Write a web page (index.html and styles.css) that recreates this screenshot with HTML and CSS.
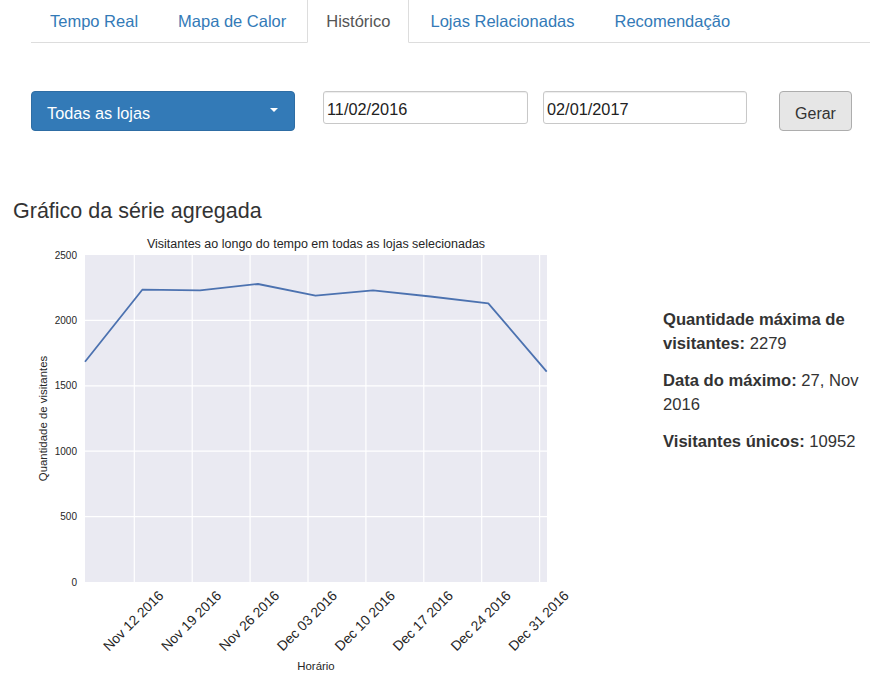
FILE: index.html
```html
<!DOCTYPE html>
<html lang="pt">
<head>
<meta charset="utf-8">
<title>Histórico</title>
<link rel="stylesheet" href="styles.css">
</head>
<body>
<ul class="tabs">
  <li class="tab"><a href="#">Tempo Real</a></li>
  <li class="tab"><a href="#">Mapa de Calor</a></li>
  <li class="tab active"><a href="#">Histórico</a></li>
  <li class="tab"><a href="#">Lojas Relacionadas</a></li>
  <li class="tab"><a href="#">Recomendação</a></li>
</ul>

<div class="controls">
  <button class="store-select" type="button"><span>Todas as lojas</span><span class="caret"></span></button>
  <input class="date date-start" type="text" value="11/02/2016">
  <input class="date date-end" type="text" value="02/01/2017">
  <button class="generate" type="button">Gerar</button>
</div>

<h3 class="section-title">Gráfico da série agregada</h3>

<div class="chart-row">
  <svg class="chart" width="600" height="460" viewBox="0 230 600 460" xmlns="http://www.w3.org/2000/svg">
    <rect x="85" y="255" width="462" height="327" fill="#eaeaf2"/>
    <g stroke="#ffffff" stroke-width="1.2">
      <line x1="85" x2="547" y1="320.4" y2="320.4"/>
      <line x1="85" x2="547" y1="385.8" y2="385.8"/>
      <line x1="85" x2="547" y1="451.2" y2="451.2"/>
      <line x1="85" x2="547" y1="516.6" y2="516.6"/>
      <line y1="255" y2="582" x1="134.3" x2="134.3"/>
      <line y1="255" y2="582" x1="192.2" x2="192.2"/>
      <line y1="255" y2="582" x1="250.1" x2="250.1"/>
      <line y1="255" y2="582" x1="308" x2="308"/>
      <line y1="255" y2="582" x1="365.9" x2="365.9"/>
      <line y1="255" y2="582" x1="423.8" x2="423.8"/>
      <line y1="255" y2="582" x1="481.7" x2="481.7"/>
      <line y1="255" y2="582" x1="539.6" x2="539.6"/>
    </g>
    <polyline fill="none" stroke="#4c72b0" stroke-width="1.8" stroke-linejoin="round"
      points="85,361.7 142.3,289.7 200,290.3 258,284 315.5,295.7 373,290.3 430.5,296.5 488.3,303.3 546.7,371.7"/>
    <g class="ytick" text-anchor="end">
      <text x="77" y="255" dominant-baseline="central">2500</text>
      <text x="77" y="320.4" dominant-baseline="central">2000</text>
      <text x="77" y="385.8" dominant-baseline="central">1500</text>
      <text x="77" y="451.2" dominant-baseline="central">1000</text>
      <text x="77" y="516.6" dominant-baseline="central">500</text>
      <text x="77" y="582" dominant-baseline="central">0</text>
    </g>
    <text class="chart-title" x="316" y="248" text-anchor="middle">Visitantes ao longo do tempo em todas as lojas selecionadas</text>
    <text class="axis-label" transform="translate(43,418.5) rotate(-90)" text-anchor="middle" dominant-baseline="central">Quantidade de visitantes</text>
    <g class="xtick" text-anchor="middle">
      <text transform="translate(133.5,621) rotate(-45)" dominant-baseline="central">Nov 12 2016</text>
      <text transform="translate(191.4,621) rotate(-45)" dominant-baseline="central">Nov 19 2016</text>
      <text transform="translate(249.3,621) rotate(-45)" dominant-baseline="central">Nov 26 2016</text>
      <text transform="translate(307.2,621) rotate(-45)" dominant-baseline="central">Dec 03 2016</text>
      <text transform="translate(365.1,621) rotate(-45)" dominant-baseline="central">Dec 10 2016</text>
      <text transform="translate(423,621) rotate(-45)" dominant-baseline="central">Dec 17 2016</text>
      <text transform="translate(480.9,621) rotate(-45)" dominant-baseline="central">Dec 24 2016</text>
      <text transform="translate(538.8,621) rotate(-45)" dominant-baseline="central">Dec 31 2016</text>
    </g>
    <text class="axis-label" x="316" y="670" text-anchor="middle">Horário</text>
  </svg>

  <div class="stats">
    <p><strong>Quantidade máxima de visitantes:</strong> 2279</p>
    <p><strong>Data do máximo:</strong> 27, Nov 2016</p>
    <p><strong>Visitantes únicos:</strong> 10952</p>
  </div>
</div>
</body>
</html>
```

FILE: styles.css
```css
* { box-sizing: border-box; }

body {
  margin: 0;
  font-family: "Liberation Sans", Arial, sans-serif;
  font-size: 16px;
  color: #333;
  background: #fff;
  overflow: hidden;
}

.tabs {
  list-style: none;
  display: flex;
  margin: -4px 16px 0 31px;
  padding: 0;
  border-bottom: 1px solid #ddd;
}

.tab {
  margin-right: 2px;
  margin-bottom: -1px;
}

.tab a {
  display: block;
  padding: 13px 18px 10px;
  line-height: 22px;
  font-size: 16.5px;
  border: 1px solid transparent;
  border-radius: 4px 4px 0 0;
  color: #337ab7;
  text-decoration: none;
}

.tab.active a {
  color: #555;
  background: #fff;
  border-color: #ddd #ddd transparent;
}

.controls {
  display: flex;
  align-items: flex-start;
  margin: 48px 0 0 31px;
}

.store-select {
  width: 264px;
  height: 40px;
  display: flex;
  align-items: center;
  justify-content: space-between;
  padding: 5px 16px 0 15px;
  background: #337ab7;
  border: 1px solid #2e6da4;
  border-radius: 4px;
  color: #fff;
  font: inherit;
  font-size: 16.3px;
}

.caret {
  width: 0;
  height: 0;
  border-top: 4.5px solid #fff;
  border-left: 4.5px solid transparent;
  border-right: 4.5px solid transparent;
  margin-top: -7px;
}

.date {
  width: 205px;
  height: 33px;
  padding: 4px 3px 0;
  border: 1px solid #c8c8c8;
  border-radius: 3px;
  box-shadow: inset 0 1px 1px rgba(0, 0, 0, 0.075);
  font-family: "Liberation Sans", Arial, sans-serif;
  font-size: 16.3px;
  color: #222;
  background: #fff;
}

.date-start { margin-left: 28px; }
.date-end { margin-left: 15px; width: 204px; }

.generate {
  margin-left: 32px;
  width: 73px;
  height: 40px;
  background: #e6e6e6;
  border: 1px solid #adadad;
  border-radius: 4px;
  color: #333;
  font: inherit;
  font-size: 16px;
  padding: 5px 0 0;
}

.section-title {
  margin: 69px 0 6px 13px;
  font-size: 21.5px;
  font-weight: normal;
  line-height: 1.1;
  color: #333;
}

.chart-row {
  display: flex;
  align-items: flex-start;
}

.chart {
  display: block;
  flex: none;
}

.chart text {
  font-family: "Liberation Sans", Arial, sans-serif;
  fill: #262626;
}

.ytick text { font-size: 10px; }
.xtick text { font-size: 13.8px; }
.chart-title { font-size: 12.5px; }
.axis-label { font-size: 11.4px; }

.stats {
  margin-left: 63px;
  padding-top: 78px;
  width: 210px;
  font-size: 16.6px;
  line-height: 24.5px;
  color: #333;
}

.stats p { margin: 0 0 12px; }
.stats strong { font-weight: bold; }
```
